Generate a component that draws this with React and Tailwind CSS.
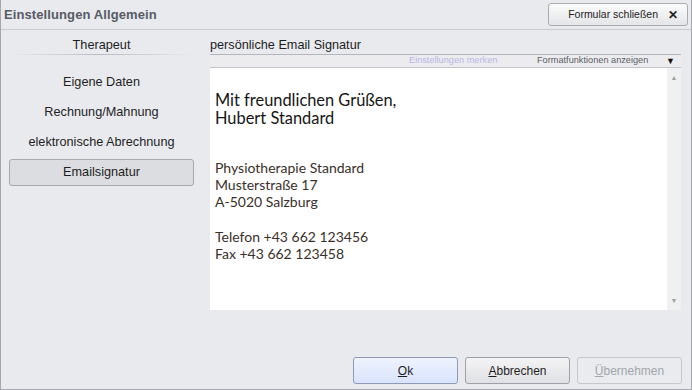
import { useState } from 'react';

const navItems = ['Eigene Daten', 'Rechnung/Mahnung', 'elektronische Abrechnung', 'Emailsignatur'];

function DialogButton({ children, primary, disabled }) {
  return (
    <button
      disabled={disabled}
      className={`w-[105px] h-[27px] rounded-[3px] border text-[12px] ${
        primary
          ? 'border-[#8e9ab8] bg-gradient-to-b from-[#eef3fe] to-[#d9e3fb] text-[#1e1e1e]'
          : disabled
          ? 'border-[#c6c8cd] bg-[#eaebee] text-[#a3a6ad]'
          : 'border-[#9ea1a8] bg-gradient-to-b from-[#f4f4f5] to-[#dfe0e3] text-[#1e1e1e]'
      }`}
    >
      {children}
    </button>
  );
}

export default function App() {
  const [active, setActive] = useState('Emailsignatur');

  return (
    <div className="w-[692px] h-[390px] flex flex-col bg-[#e9eaee] border-x border-b border-[#a5a7ae] font-['Liberation_Sans',Arial,sans-serif] text-[#222] overflow-hidden">
      {/* title bar */}
      <div className="h-[30px] shrink-0 flex items-start justify-between border-b border-[#c9cbd1] pl-[3px] pr-[3px]">
        <span className="mt-[5px] text-[13px] font-bold text-[#565b66] tracking-[0.1px]">Einstellungen Allgemein</span>
        <button className="h-[23px] w-[140px] mt-[3px] flex items-center justify-end gap-[10px] pr-[9px] rounded-[3px] border border-[#a9abb1] bg-gradient-to-b from-[#fbfbfb] to-[#e4e5e8] text-[10.5px] text-[#222]">
          Formular schließen
          <span className="text-[12px] font-bold leading-none">✕</span>
        </button>
      </div>

      <div className="flex flex-1 min-h-0">
        {/* left nav */}
        <div className="w-[185px] ml-[8px] shrink-0 flex flex-col">
          <div className="pt-[7px] leading-[16px] pb-px text-center text-[12.7px] text-[#1e1e1e]">Therapeut</div>
          <div className="h-px bg-gradient-to-r from-[#e9eaee] via-[#b9bbc1] to-[#e9eaee]" />
          <div className="flex flex-col mt-[14px] gap-[3px]">
            {navItems.map((item) => (
              <button
                key={item}
                onClick={() => setActive(item)}
                className={`h-[27px] rounded-[3px] text-[12.7px] text-[#1e1e1e] ${
                  active === item ? 'border border-[#a7a9af] bg-[#dcdde1]' : 'border border-transparent'
                }`}
              >
                {item}
              </button>
            ))}
          </div>
        </div>

        {/* right content */}
        <div className="flex-1 ml-[16px] mr-[10px] flex flex-col">
          <div className="pt-[7px] leading-[16px] pb-px text-[12.7px] text-[#1e1e1e] whitespace-nowrap">persönliche Email Signatur</div>
          <div className="h-[13px] shrink-0 flex items-center border-t border-[#b4b6bc] bg-[#ececef] text-[9.2px] whitespace-nowrap leading-none">
            <span className="ml-[199px] w-[128px] text-[#b7b7e6]">Einstellungen merken</span>
            <span className="w-[129px] text-[#5d5d66]">Formatfunktionen anzeigen</span>
            <span className="text-[9px] text-[#111]">▼</span>
          </div>
          <div className="h-[243px] shrink-0 flex border-t border-[#c2c4c9] bg-white">
            <div className="flex-1 pl-[5px] pt-[23px] font-['Lato','Open_Sans',sans-serif]">
              <div className="text-[16.4px] leading-[18px] text-[#151515]">
                <div>Mit freundlichen Grüßen,</div>
                <div>Hubert Standard</div>
              </div>
              <div className="mt-[32px] text-[14px] leading-[17px] text-[#3a2f2a]">
                <div>Physiotherapie Standard</div>
                <div>Musterstraße 17</div>
                <div>A-5020 Salzburg</div>
                <div className="h-[18px]" />
                <div>Telefon +43 662 123456</div>
                <div>Fax +43 662 123458</div>
              </div>
            </div>
            <div className="w-[14px] bg-[#f0f0f1] flex flex-col justify-between items-center py-[6px] text-[7px] text-[#a0a0a4] leading-none">
              <span>▲</span>
              <span>▼</span>
            </div>
          </div>
        </div>
      </div>

      {/* footer buttons */}
      <div className="h-[35px] shrink-0 flex justify-end gap-[7px] pr-[9px] pt-[3px]">
        <DialogButton primary>
          <span className="underline">O</span>k
        </DialogButton>
        <DialogButton>
          <span className="underline">A</span>bbrechen
        </DialogButton>
        <DialogButton disabled>
          <span className="underline">Ü</span>bernehmen
        </DialogButton>
      </div>
    </div>
  );
}
